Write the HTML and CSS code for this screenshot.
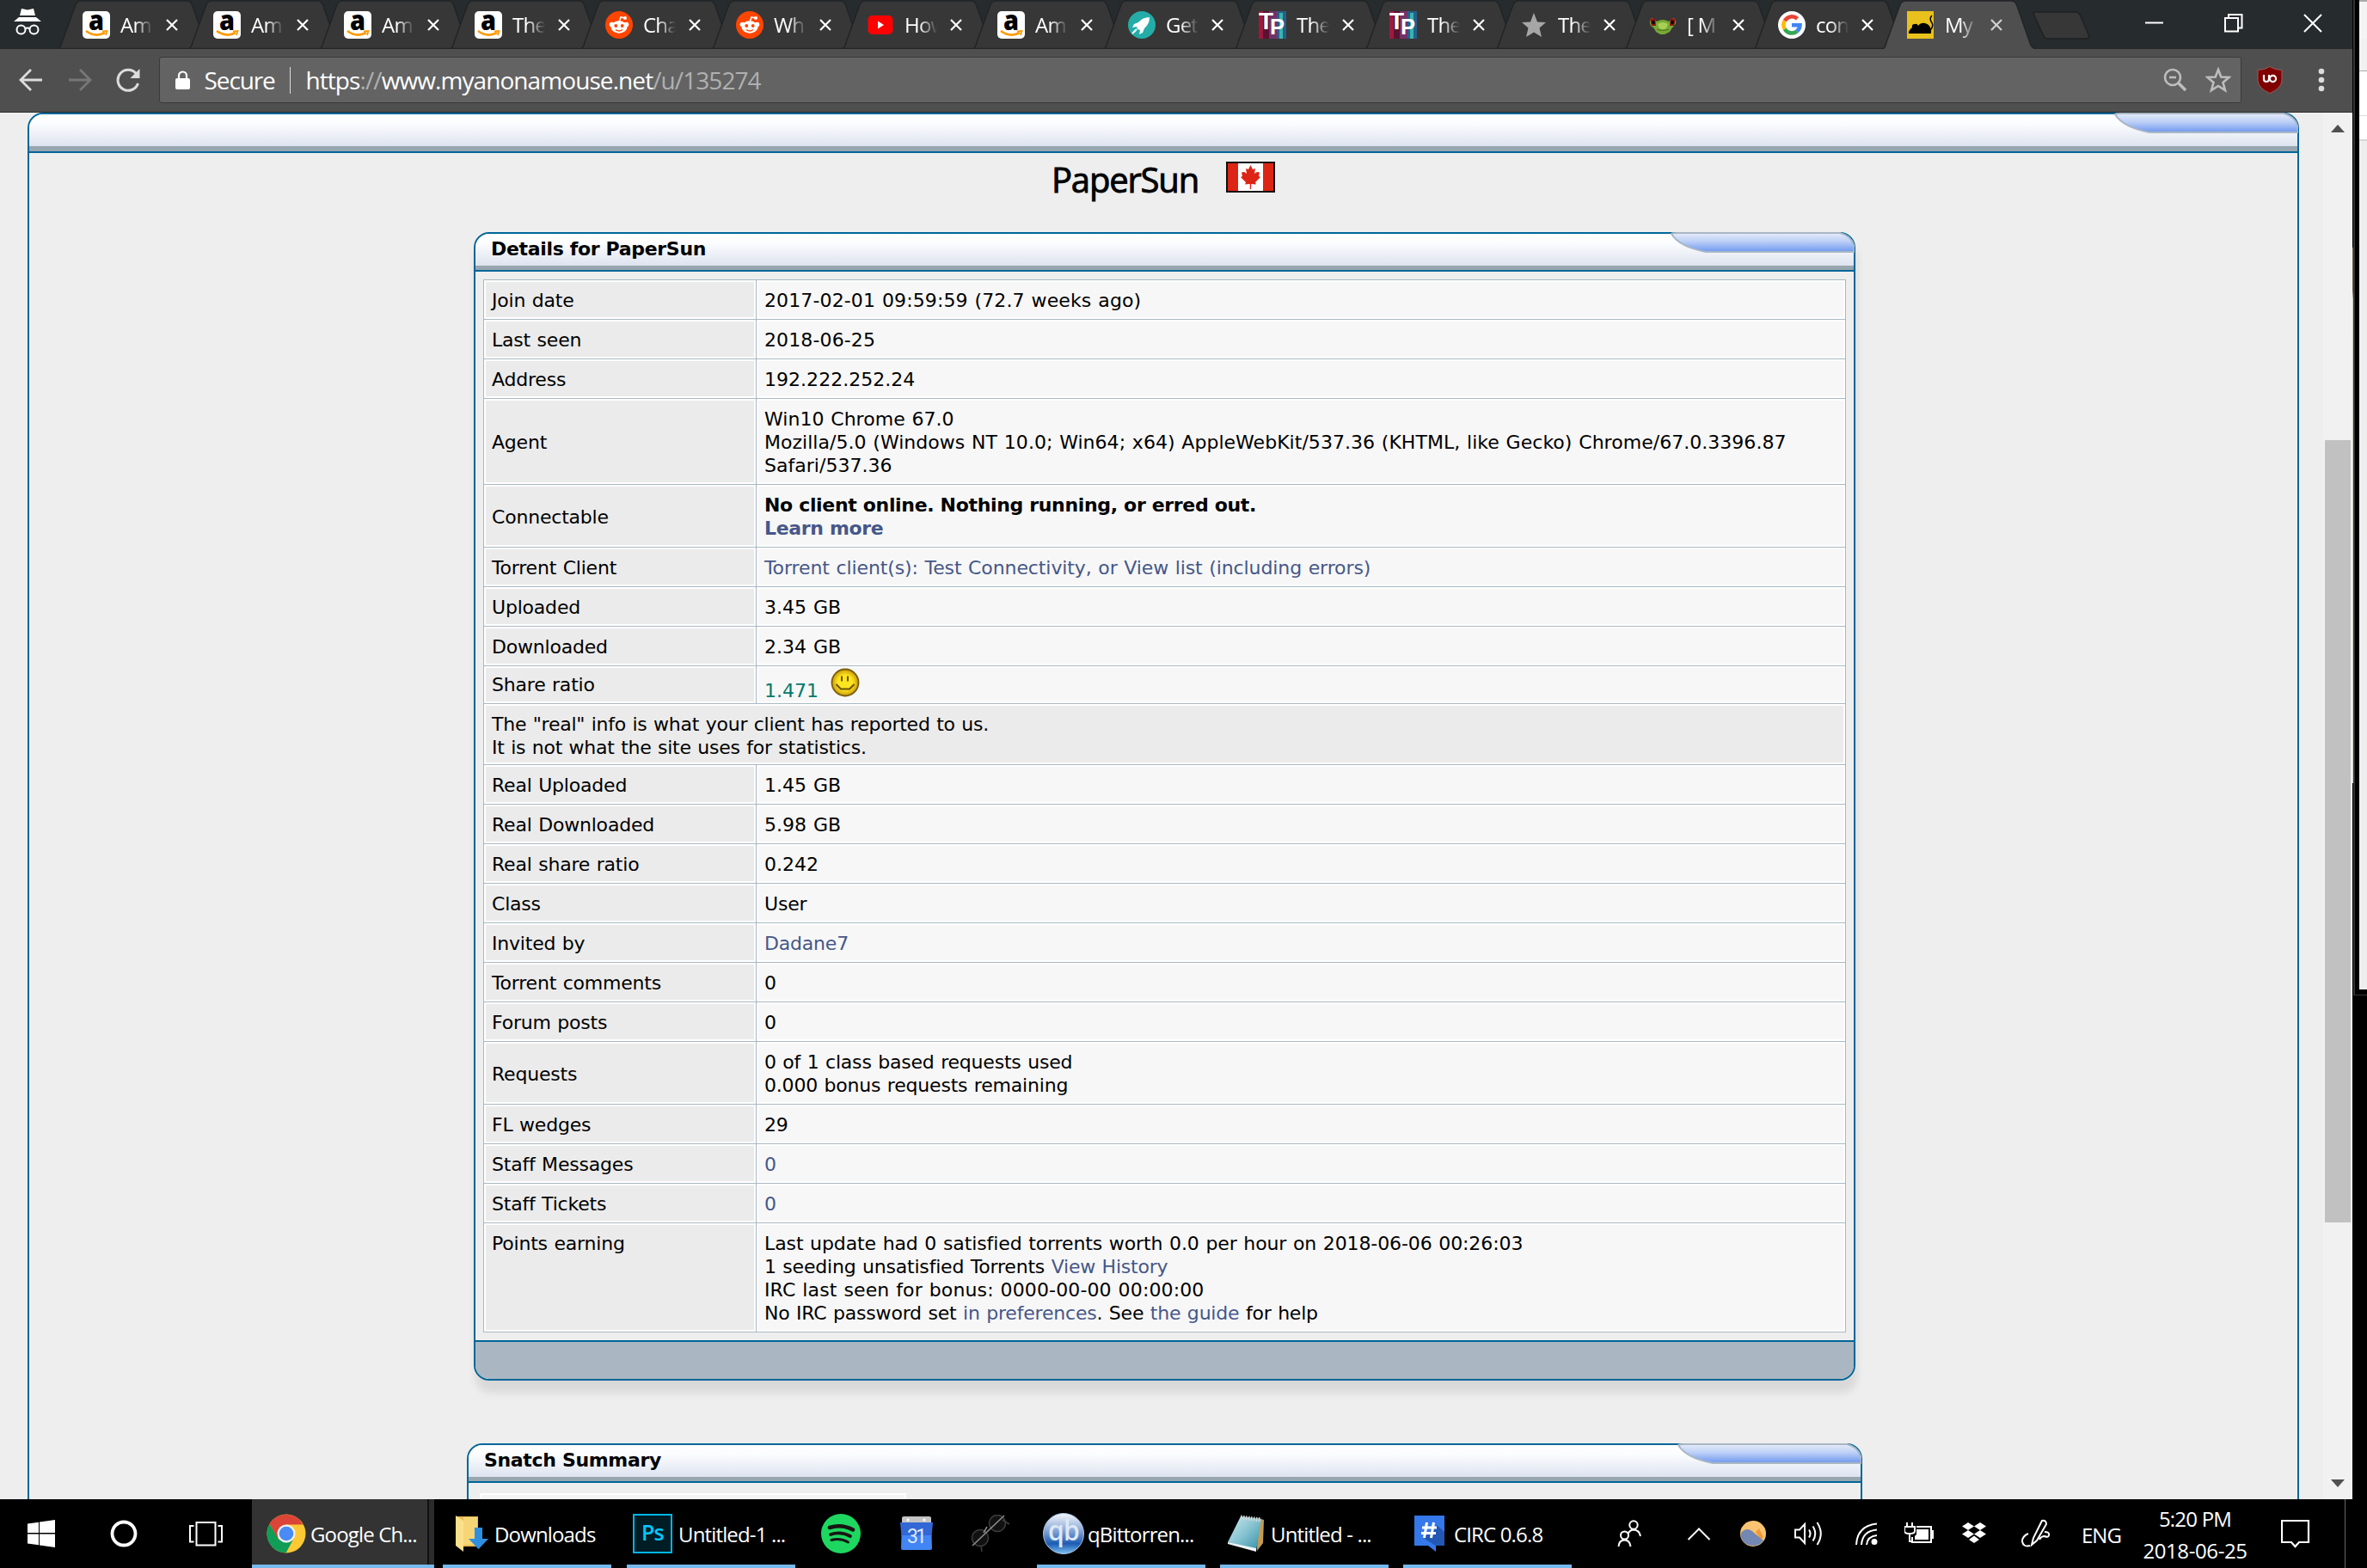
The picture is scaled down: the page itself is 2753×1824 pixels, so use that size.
FILE: index.html
```html
<!DOCTYPE html>
<html lang="en">
<head>
<meta charset="utf-8">
<title>PaperSun</title>
<link rel="stylesheet" href="styles.css">
</head>
<body>
<svg class="defs" aria-hidden="true">
  <defs>
    <linearGradient id="gloss" x1="0" y1="0" x2="0" y2="1"><stop offset="0" stop-color="#e6ecf9"/><stop offset=".45" stop-color="#bccff6"/><stop offset="1" stop-color="#6f98f0"/></linearGradient>
    <linearGradient id="orb" x1="0" y1="0" x2="0" y2="1"><stop offset="0" stop-color="#f4f7fb"/><stop offset=".4" stop-color="#8fabd6"/><stop offset=".75" stop-color="#1d5cb3"/><stop offset="1" stop-color="#7fc0f0"/></linearGradient>
    <linearGradient id="pad" x1="0" y1="0" x2="1" y2="1"><stop offset="0" stop-color="#cfeaf0"/><stop offset=".5" stop-color="#86c3d0"/><stop offset="1" stop-color="#2f8ea6"/></linearGradient>
    <radialGradient id="smile"><stop offset=".55" stop-color="#ffe51f"/><stop offset="1" stop-color="#c89a0a"/></radialGradient>
    <symbol id="tab" viewBox="0 0 178 57"><path d="M0 56.500C3 55 3 53 4.500 48L19 8Q21 1 26 1H149Q154 1 156 7L171 50Q173 56 178 56.500Z" fill="#373737" stroke="#222426" stroke-width="1.500"/></symbol>
    <symbol id="tab-on" viewBox="0 0 178 57"><path d="M0 57C3 55 3 53 4.500 48L19 8Q21 1 26 1H149Q154 1 156 7L171 50Q173 56 178 57Z" fill="#4f4f4f"/><path d="M0 57C3 55 3 53 4.500 48L19 8Q21 1 26 1H149Q154 1 156 7L171 50Q173 56 178 57" fill="none" stroke="#232527" stroke-width="1.500"/></symbol>
    <symbol id="x" viewBox="0 0 14 14"><path d="M1 1 13 13M13 1 1 13" stroke="currentColor" stroke-width="2.200" fill="none"/></symbol>
    <symbol id="amazon" viewBox="0 0 32 32"><rect width="32" height="32" rx="5" fill="#fff"/><text x="16" y="22" text-anchor="middle" font-family="Open Sans" font-weight="800" font-size="32" textLength="18" lengthAdjust="spacingAndGlyphs">a</text><path d="M4 23Q15 31 26 25" stroke="#f90" stroke-width="2.600" fill="none"/><path d="M23 23.500 28.500 23 27 28" stroke="#f90" stroke-width="1.800" fill="none"/></symbol>
    <symbol id="reddit" viewBox="0 0 32 32"><circle cx="16" cy="16" r="16" fill="#ff4500"/><path d="M16 13 18 7 23 8" stroke="#fff" stroke-width="1.600" fill="none"/><circle cx="23" cy="8" r="2" fill="#fff"/><circle cx="7.500" cy="15.500" r="2.800" fill="#fff"/><circle cx="24.500" cy="15.500" r="2.800" fill="#fff"/><ellipse cx="16" cy="18.500" rx="9.500" ry="7.200" fill="#fff"/><circle cx="12.300" cy="17" r="1.900" fill="#ff4500"/><circle cx="19.700" cy="17" r="1.900" fill="#ff4500"/><path d="M12 21.500Q16 24.500 20 21.500" stroke="#ff4500" stroke-width="1.400" fill="none"/></symbol>
    <symbol id="youtube" viewBox="0 0 32 32"><rect x="1.500" y="5" width="29" height="22" rx="5" fill="#f00"/><path d="M13 11.500 20 16 13 20.500Z" fill="#fff"/></symbol>
    <symbol id="rocket" viewBox="0 0 32 32"><circle cx="16" cy="16" r="16" fill="#24ada8"/><path d="M25 7Q17 7 12 13L7 15 5 19 10 18 11 21 14 22 13 27 17 25 19 20Q25 15 25 7Z" fill="#fff"/><path d="M5 26 10 21" stroke="#fff" stroke-width="2"/></symbol>
    <symbol id="tp" viewBox="0 0 32 32"><path fill="#9e1a3d" d="M0 0H9V32H0z"/><path fill="#5b1232" d="M5 0H12V32H5z"/><path fill="#723268" d="M12 0H21V32H12z"/><path fill="#255f8a" d="M21 0H32V32H21z"/><path fill="#39b4ac" d="M24 2H28V32H24z"/><text x="0" y="21" fill="#fff" font-family="Liberation Sans" font-weight="700" font-size="27" textLength="17" lengthAdjust="spacingAndGlyphs">T</text><text x="13" y="27" fill="#fff" font-family="Liberation Sans" font-weight="700" font-size="26" textLength="17" lengthAdjust="spacingAndGlyphs">P</text></symbol>
    <symbol id="star" viewBox="0 0 32 32"><path d="M16 2 20 12.500 30 13 22.500 19.500 25 30 16 24.500 7 30 9.500 19.500 2 13 12 12.500Z" fill="#a6a6a6"/></symbol>
    <symbol id="frog" viewBox="0 0 32 32"><path d="M1 14Q0 8 4 8L9 12Q16 8 23 12L28 8Q32 8 31 14L29 17Q26 20 24 24L18 27H13L8 24Q6 19 2 17Z" fill="#7aa834"/><path d="M10 15Q16 11 22 15L20 20Q16 22 12 20Z" fill="#a6cf55"/><path d="M1 9 7 8 8 17 3 17ZM25 8 31 9 29 17 24 17Z" fill="#8e1414"/><circle cx="5" cy="13" r="2.200" fill="#1d0505"/><circle cx="27" cy="13" r="2.200" fill="#1d0505"/><path d="M9 21Q16 24 23 21" stroke="#4c7a22" stroke-width="1.200" fill="none"/></symbol>
    <symbol id="google" viewBox="0 0 32 32"><circle cx="16" cy="16" r="16" fill="#fff"/><g fill="none" stroke-width="4.600"><path d="M22.500 8.800A9.500 9.500 0 0 0 7.800 11.200" stroke="#ea4335"/><path d="M7.800 11.200A9.500 9.500 0 0 0 7.800 20.800" stroke="#fbbc05"/><path d="M7.800 20.800A9.500 9.500 0 0 0 22 23.400" stroke="#34a853"/><path d="M22 23.400A9.500 9.500 0 0 0 25.500 16.300H16" stroke="#4285f4"/></g></symbol>
    <symbol id="mouse" viewBox="0 0 32 32"><path fill="#e9c11c" d="M0 0H31V32H0z"/><path d="M2 26Q1 23 6 19Q5 15 9 15Q12 14 13 17Q16 13 21 14Q29 16 28 26Z"/><path d="M27 22Q32 17 28 12Q26 8 29 5" stroke="#000" stroke-width="1.500" fill="none"/></symbol>
    <symbol id="corner" viewBox="0 0 214 24"><path d="M1 2Q2 1 8 1H197Q214 5 214 23H41Q10 17 1 2Z" fill="url(#gloss)" stroke="#a9b7c4" stroke-width="2"/></symbol>
  </defs>
</svg>
<div class="desktop">
  <main class="browser">
    <div class="strip">
      <div class="incognito"><svg width="32" height="32" viewBox="0 0 32 32"><path d="M9 0 16 1.500 23 0 25 8H7ZM6 10H26L32 15H0Z" fill="#fff"/><g fill="none" stroke="#fff" stroke-width="2"><circle cx="8.500" cy="24.500" r="5"/><circle cx="23.500" cy="24.500" r="5"/><path d="M13 23.500Q16 21.500 19 23.500"/></g></svg></div>
      <div class="tab"><svg class="shape"><use href="#tab"/></svg><svg class="fav"><use href="#amazon"/></svg><span class="name">Am</span><svg class="close"><use href="#x"/></svg></div>
      <div class="tab"><svg class="shape"><use href="#tab"/></svg><svg class="fav"><use href="#amazon"/></svg><span class="name">Am</span><svg class="close"><use href="#x"/></svg></div>
      <div class="tab"><svg class="shape"><use href="#tab"/></svg><svg class="fav"><use href="#amazon"/></svg><span class="name">Am</span><svg class="close"><use href="#x"/></svg></div>
      <div class="tab"><svg class="shape"><use href="#tab"/></svg><svg class="fav"><use href="#amazon"/></svg><span class="name">The</span><svg class="close"><use href="#x"/></svg></div>
      <div class="tab"><svg class="shape"><use href="#tab"/></svg><svg class="fav"><use href="#reddit"/></svg><span class="name">Cha</span><svg class="close"><use href="#x"/></svg></div>
      <div class="tab"><svg class="shape"><use href="#tab"/></svg><svg class="fav"><use href="#reddit"/></svg><span class="name">Wh</span><svg class="close"><use href="#x"/></svg></div>
      <div class="tab"><svg class="shape"><use href="#tab"/></svg><svg class="fav"><use href="#youtube"/></svg><span class="name">How</span><svg class="close"><use href="#x"/></svg></div>
      <div class="tab"><svg class="shape"><use href="#tab"/></svg><svg class="fav"><use href="#amazon"/></svg><span class="name">Am</span><svg class="close"><use href="#x"/></svg></div>
      <div class="tab"><svg class="shape"><use href="#tab"/></svg><svg class="fav"><use href="#rocket"/></svg><span class="name">Get</span><svg class="close"><use href="#x"/></svg></div>
      <div class="tab"><svg class="shape"><use href="#tab"/></svg><svg class="fav"><use href="#tp"/></svg><span class="name">The</span><svg class="close"><use href="#x"/></svg></div>
      <div class="tab"><svg class="shape"><use href="#tab"/></svg><svg class="fav"><use href="#tp"/></svg><span class="name">The</span><svg class="close"><use href="#x"/></svg></div>
      <div class="tab tight"><svg class="shape"><use href="#tab"/></svg><svg class="fav"><use href="#star"/></svg><span class="name">The</span><svg class="close"><use href="#x"/></svg></div>
      <div class="tab tight"><svg class="shape"><use href="#tab"/></svg><svg class="fav"><use href="#frog"/></svg><span class="name">[ M</span><svg class="close"><use href="#x"/></svg></div>
      <div class="tab tight"><svg class="shape"><use href="#tab"/></svg><svg class="fav"><use href="#google"/></svg><span class="name">con</span><svg class="close"><use href="#x"/></svg></div>
      <div class="tab on"><svg class="shape"><use href="#tab-on"/></svg><svg class="fav"><use href="#mouse"/></svg><span class="name">My</span><svg class="close"><use href="#x"/></svg></div>
      <svg class="newtab" width="68" height="33" viewBox="0 0 68 33"><path d="M2 1H50Q54 1 56 6L65 27Q67 32 62 32H18Q14 32 12 27L2 5Q0 1 2 1Z" fill="#373737" stroke="#1f2123" stroke-width="1.500"/></svg>
      <div class="controls">
        <svg width="22" height="22" viewBox="0 0 22 22"><path d="M0 10.500H21" stroke="#fff" stroke-width="2"/></svg>
        <svg width="22" height="22" viewBox="0 0 22 22"><path d="M1 5H16V20.500H1ZM5 5V1H20.500V16.500H16" fill="none" stroke="#fff" stroke-width="2"/></svg>
        <svg width="22" height="22" viewBox="0 0 22 22"><path d="M1 1 21 21M21 1 1 21" fill="none" stroke="#fff" stroke-width="2"/></svg>
      </div>
    </div>
    <div class="toolbar">
      <svg width="28" height="28" viewBox="0 0 28 28"><path d="M14 2 2 14 14 26M2 14H27" fill="none" stroke="#dcdcdc" stroke-width="2.800"/></svg>
      <svg width="28" height="28" viewBox="0 0 28 28"><path d="M14 2 26 14 14 26M26 14H1" fill="none" stroke="#777" stroke-width="2.800"/></svg>
      <svg width="28" height="28" viewBox="0 0 28 28"><path d="M24 7.500A12 12 0 1 0 25.500 18" fill="none" stroke="#dcdcdc" stroke-width="3"/><path d="M27.500 1V12H16.500Z" fill="#dcdcdc"/></svg>
      <div class="omnibox">
        <svg width="17" height="23" viewBox="0 0 17 23"><rect y="9" width="17" height="13" rx="2" fill="#fff"/><path d="M4 10V6A4.500 4.500 0 0 1 13 6V10" fill="none" stroke="#fff" stroke-width="2.200"/></svg>
        <span class="secure">Secure</span><i class="bar"></i>
        <span class="url">https<em>://</em>www.myanonamouse.net<em>/u/135274</em></span>
        <svg class="loupe" width="28" height="28" viewBox="0 0 28 28"><g fill="none" stroke="#bdbdbd" stroke-width="2.600"><circle cx="11" cy="11" r="9"/><path d="M7 11H15"/></g><path d="M17.500 17.500 26 26" stroke="#bdbdbd" stroke-width="3.600"/></svg>
        <svg width="30" height="30" viewBox="0 0 30 30"><path d="M15 3 18.300 11.500 27.500 12 20.500 18 23 27 15 22 7 27 9.500 18 2.500 12 11.700 11.500Z" fill="none" stroke="#bdbdbd" stroke-width="2.600"/></svg>
      </div>
      <svg class="shield" width="30" height="32" viewBox="0 0 30 32"><path d="M15 .5Q21 4.500 29 4.500V17Q28 26 15 31.500Q2 26 1 17V4.500Q9 4.500 15 .5Z" fill="#800000" stroke="#9b5a5a"/><g fill="none" stroke="#fff" stroke-width="2.200"><path d="M8 10V15Q8 18 11 18Q14 18 14 15V10"/><circle cx="18.500" cy="14.500" r="3.600"/></g></svg>
      <svg width="8" height="28" viewBox="0 0 8 28"><g fill="#dcdcdc"><circle cx="4" cy="4" r="3.300"/><circle cx="4" cy="14" r="3.300"/><circle cx="4" cy="24" r="3.300"/></g></svg>
    </div>
    <div class="view">
      <div class="page">
        <section class="panel outer">
          <header class="cap"><svg class="corner"><use href="#corner"/></svg></header>
          <h1><span>PaperSun</span><svg width="57" height="36" viewBox="0 0 57 36"><rect x="1" y="1" width="55" height="34" fill="#fff" stroke="#111" stroke-width="2"/><path d="M2 2H14V34H2ZM43 2H55V34H43Z" fill="#dd2515"/><path d="M28.500 4 31 9 34 8 33 14 36 12 39 12.500 38 17 40 18 34 24 35 26.500 29.200 26 29.200 32H27.800V26L22 26.500 23 24 17 18 19 17 18 12.500 21 12 24 14 23 8 26 9Z" fill="#dd2515"/></svg></h1>
          <section class="panel details">
            <header class="cap"><b>Details for PaperSun</b><svg class="corner"><use href="#corner"/></svg></header>
            <div class="table">
              <div class="row"><div class="k">Join date</div><div class="v wide">2017-02-01 09:59:59 (72.7 weeks ago)</div></div>
              <div class="row"><div class="k">Last seen</div><div class="v wide">2018-06-25</div></div>
              <div class="row"><div class="k">Address</div><div class="v even">192.222.252.24</div></div>
              <div class="row"><div class="k">Agent</div><div class="v even">Win10 Chrome 67.0<br>Mozilla/5.0 (Windows NT 10.0; Win64; x64) AppleWebKit/537.36 (KHTML, like Gecko) Chrome/67.0.3396.87<br>Safari/537.36</div></div>
              <div class="row"><div class="k">Connectable</div><div class="v"><b>No client online. Nothing running, or erred out.<br><a>Learn more</a></b></div></div>
              <div class="row"><div class="k">Torrent Client</div><div class="v near"><a>Torrent client(s): Test Connectivity, or View list (including errors)</a></div></div>
              <div class="row"><div class="k">Uploaded</div><div class="v even">3.45 GB</div></div>
              <div class="row"><div class="k">Downloaded</div><div class="v even">2.34 GB</div></div>
              <div class="row ratio"><div class="k">Share ratio</div><div class="v even"><span>1.471</span><svg width="34" height="34" viewBox="0 0 34 34"><circle cx="17" cy="17" r="15.500" fill="url(#smile)" stroke="#7a5c0c" stroke-width="1.800"/><path d="M13 9.500V15.500M20 9.500V15.500" stroke="#6b5200" stroke-width="2"/><path d="M6.500 19 12 24.500H22L27.500 19" stroke="#6b5200" stroke-width="2" fill="none"/></svg></div></div>
              <div class="row note"><div class="k">The "real" info is what your client has reported to us.<br>It is not what the site uses for statistics.</div></div>
              <div class="row"><div class="k">Real Uploaded</div><div class="v even">1.45 GB</div></div>
              <div class="row"><div class="k">Real Downloaded</div><div class="v even">5.98 GB</div></div>
              <div class="row"><div class="k">Real share ratio</div><div class="v even">0.242</div></div>
              <div class="row"><div class="k">Class</div><div class="v">User</div></div>
              <div class="row"><div class="k">Invited by</div><div class="v"><a>Dadane7</a></div></div>
              <div class="row"><div class="k">Torrent comments</div><div class="v">0</div></div>
              <div class="row"><div class="k">Forum posts</div><div class="v">0</div></div>
              <div class="row"><div class="k">Requests</div><div class="v">0 of 1 class based requests used<br>0.000 bonus requests remaining</div></div>
              <div class="row"><div class="k">FL wedges</div><div class="v">29</div></div>
              <div class="row"><div class="k">Staff Messages</div><div class="v"><a>0</a></div></div>
              <div class="row"><div class="k">Staff Tickets</div><div class="v"><a>0</a></div></div>
              <div class="row top"><div class="k">Points earning</div><div class="v"><span class="near">Last update had 0 satisfied torrents worth 0.0 per hour on 2018-06-06 00:26:03</span><br>1 seeding unsatisfied Torrents <a>View History</a><br><span class="wide2">IRC last seen for bonus: 0000-00-00 00:00:00</span><br>No IRC password set <a>in preferences</a>. See <a>the guide</a> for help</div></div>
            </div>
            <footer class="foot"></footer>
          </section>
          <section class="panel snatch">
            <header class="cap"><b>Snatch Summary</b><svg class="corner"><use href="#corner"/></svg></header>
            <div class="inner"></div>
          </section>
        </section>
      </div>
      <div class="scroll"><svg width="16" height="9" viewBox="0 0 16 9"><path d="M8 0 16 9H0Z" fill="#505050"/></svg><div class="thumb"></div><svg width="16" height="9" viewBox="0 0 16 9"><path d="M0 0H16L8 9Z" fill="#505050"/></svg></div>
    </div>
  </main>
  <aside class="edge"><div class="photo"></div><div class="frame"><div class="other"><i class="o1"></i><i class="o2"></i><i class="o3"></i><i class="o4"></i></div></div></aside>
  <footer class="taskbar">
    <svg class="sys start" width="32" height="32" viewBox="0 0 32 32"><path d="M0 4.500 13 2.700V15H0ZM14 2.500 32 0V15H14ZM0 16.500H13V29.200L0 27.500ZM14 16.500H32V32L14 29.400Z" fill="#fff"/></svg>
    <svg class="sys" width="34" height="34" viewBox="0 0 34 34"><circle cx="17" cy="17" r="13.500" fill="none" stroke="#fff" stroke-width="3.800"/></svg>
    <svg class="sys view3" width="42" height="30" viewBox="0 0 42 30"><path d="M9.500 2H31.500V28.500H9.500ZM6.500 6H2V24.500H6.500M34.500 6H39V24.500H34.500" fill="none" stroke="#fff" stroke-width="2"/></svg>
    <div class="app cur"><svg width="46" height="46" viewBox="0 0 46 46"><circle cx="23" cy="23" r="22.500" fill="#fcc934"/><path d="M3.500 11.800A22.500 22.500 0 0 1 42.500 12.500H23L13 29Z" fill="#db4437"/><path d="M3.500 11.800 13.500 29 23 33.500 32 28 22.500 45.500A22.500 22.500 0 0 1 3.500 11.800Z" fill="#0f9d58"/><circle cx="23" cy="23" r="10.500" fill="#f1f1f1"/><circle cx="23" cy="23" r="8.300" fill="#4a8af4"/></svg><span>Google Ch...</span></div>
    <div class="app dl"><svg width="38" height="42" viewBox="0 0 38 42"><path d="M1 1H26V36H1Z" fill="#e8bd52"/><path d="M0 0 9 6V42L0 35Z" fill="#fbe08c"/><path d="M9 2H25V34H9Z" fill="#f6d576"/><path d="M22 14H31V27H38L26.500 39 15 27H22Z" fill="#2e8fe0"/></svg><span>Downloads</span></div>
    <div class="app ps"><svg width="46" height="46" viewBox="0 0 46 46"><rect x="1" y="1" width="44" height="44" fill="#001d26" stroke="#00b5e6" stroke-width="2"/><text x="10" y="31" fill="#00c8ff" font-family="Open Sans" font-weight="600" font-size="26" textLength="26" lengthAdjust="spacingAndGlyphs">Ps</text></svg><span>Untitled-1 ...</span></div>
    <svg class="spot" width="46" height="46" viewBox="0 0 46 46"><circle cx="23" cy="23" r="23" fill="#1ed760"/><g fill="none" stroke="#191414" stroke-linecap="round"><path d="M10 16Q24 11.500 37 18.500" stroke-width="4.600"/><path d="M11 24Q23 20 34 26" stroke-width="3.800"/><path d="M12 30.500Q22 27.500 31.500 33" stroke-width="3"/></g></svg>
    <svg class="cal" width="38" height="40" viewBox="0 0 38 40"><rect x="2" y="0" width="34" height="10" rx="2" fill="#c4c4c4"/><circle cx="9" cy="4" r="1.600" fill="#fff"/><circle cx="28" cy="4" r="1.600" fill="#fff"/><path d="M0 7H38L36.500 23H1.500Z" fill="#3367d6"/><path d="M1.500 22H36.500L37 37Q37 39 35 39H3Q1 39 1 37Z" fill="#4285f4"/><text x="8" y="31" fill="#dfe8fb" font-family="Roboto" font-size="23" textLength="23">31</text></svg>
    <svg class="glasses" width="44" height="44" viewBox="0 0 44 44"><g fill="#111" stroke="#3c3c3c" stroke-width="1.600"><circle cx="10" cy="27" r="9.500"/><circle cx="30" cy="10" r="9.500"/><path d="M36 6 44 11M11 36 12 43" fill="none"/></g><path d="M1 36 38 1M14 21 18 14" stroke="#8a8a8a" stroke-width="1.600"/></svg>
    <div class="app qb"><svg width="48" height="48" viewBox="0 0 48 48"><circle cx="24" cy="24" r="23.500" fill="url(#orb)" stroke="#a8c4e8"/><text x="6" y="32" fill="#dbe8f7" font-family="Open Sans" font-weight="600" font-size="33" textLength="36" lengthAdjust="spacingAndGlyphs">qb</text></svg><span>qBittorren...</span></div>
    <div class="app np"><svg width="44" height="44" viewBox="0 0 44 44"><path d="M36 4 43 6 42 33 35 42Z" fill="#c49a55"/><path d="M16 2 40 5 34 42 1 32Z" fill="url(#pad)"/><path d="M1 32 34 39 34 43 1 34Z" fill="#eef5f7"/><path d="M16 3 40 6" stroke="#d8d8d8" stroke-width="5" stroke-dasharray="1.500 1.500"/></svg><span>Untitled - ...</span></div>
    <div class="app circ"><svg width="36" height="44" viewBox="0 0 36 44"><path d="M0 1H35V36H25V43L16 36H0Z" fill="#3578ea"/><path d="M26 12 35 20V36H25L10 27Z" fill="#2257b4"/><path d="M14.500 9 11.500 27M22.500 9 19.500 27M9 15H26M8 21.500H25" stroke="#fff" stroke-width="3" fill="none"/></svg><span>CIRC 0.6.8</span></div>
    <div class="tray">
      <svg class="i1" width="30" height="32" viewBox="0 0 30 32"><g fill="none" stroke="#fff" stroke-width="2"><circle cx="19" cy="6" r="4.700"/><circle cx="8.500" cy="18" r="4.500"/><path d="M12.500 16Q15 11.500 19 11.500Q26 12 27 19M1.500 31Q2 23.500 8.500 23.500Q14.500 23.500 15.500 31"/></g></svg>
      <svg class="i2" width="28" height="16" viewBox="0 0 28 16"><path d="M1.500 15 14 2.500 26.500 15" fill="none" stroke="#fff" stroke-width="2"/></svg>
      <svg class="i3" width="30" height="30" viewBox="0 0 30 30"><circle cx="15" cy="15" r="15" fill="#f8c471"/><path d="M18 13 22 9 27 19 24 22Z" fill="#f29a38"/><path d="M1 14Q8 6 16 14L27 23A15 15 0 0 1 .5 18Z" fill="#7387b5"/></svg>
      <svg class="i4" width="34" height="28" viewBox="0 0 34 28"><g fill="none" stroke="#fff" stroke-width="2"><path d="M1 9.500H6L12 3V25L6 18.500H1Z"/><path d="M17 9.500Q20 14 17 18.500M21.500 5.500Q27 14 21.500 22.500M26.500 1Q35 14 26.500 27"/></g></svg>
      <svg class="i5" width="26" height="26" viewBox="0 0 26 26"><g fill="none" stroke="#fff" stroke-width="2"><path d="M1 26Q2 4 25 1.500M7 26Q8 10 25 8.500M13 26Q14 16 25 15"/></g><circle cx="22" cy="22.500" r="3.500" fill="#fff"/></svg>
      <svg class="i6" width="34" height="26" viewBox="0 0 34 26"><path d="M3 0V5M9 0V5M0 5H12V10Q12 13 6 13Q0 13 0 10ZM6 13V22H10" fill="none" stroke="#fff" stroke-width="2"/><path d="M14 5H31V23H9V17M31 10H33V18H31" fill="none" stroke="#fff" stroke-width="2"/><path d="M14 8H28V20H12V16L14 14Z" fill="#fff"/></svg>
      <svg class="i7" width="28" height="26" viewBox="0 0 28 26"><path d="M7 0 14 4.500 7 9 0 4.500ZM21 0 28 4.500 21 9 14 4.500ZM7 9 14 13.500 7 18 0 13.500ZM21 9 28 13.500 21 18 14 13.500ZM14 15.500 20 20 14 24 8 20Z" fill="#fff"/></svg>
      <svg class="i8" width="34" height="34" viewBox="0 0 34 34"><g fill="none" stroke="#fff" stroke-width="2"><path d="M12 30 14 22 24 2Q29 1 29 6L18 25ZM8 17Q1 20 1 26Q2 33 10 31M27 15Q33 15 32 19Q31 22 27 20Q23 20 21 24"/></g></svg>
      <span class="lang">ENG</span>
      <div class="clock"><span>5:20 PM</span><span class="date">2018-06-25</span></div>
      <svg class="i9" width="34" height="33" viewBox="0 0 34 33"><path d="M1 1H32V26H21L16.500 31 12 26H1Z" fill="none" stroke="#fff" stroke-width="2.200"/></svg>
      <i class="peek"></i>
    </div>
  </footer>
</div>
</body>
</html>
```
FILE: styles.css
```css
* { box-sizing: border-box; }
body { margin: 0; background: #000; overflow: hidden; font-family: "Open Sans", sans-serif; }
svg { display: block; flex: none; }
.defs { position: absolute; width: 0; height: 0; }
.desktop { width: 2753px; height: 1824px; display: grid; grid-template-columns: 2736px 17px; grid-template-rows: 1744px 80px; }
.browser { display: flex; flex-direction: column; min-width: 0; }

.strip { height: 57px; background: #262b2e; border-bottom: 1px solid #282828; display: flex; flex: none; }
.incognito { width: 68px; padding: 10px 0 0 16px; flex: none; }
.tab { position: relative; flex: none; width: 178px; height: 57px; margin-right: -26px; display: flex; align-items: flex-start; padding: 13px 0 0 28px; color: #fff; }
.tab.tight { margin-right: -28px; }
.tab.on { z-index: 1; }
.tab.on .close { color: #d0d0d0; }
.shape { position: absolute; left: 0; top: 0; width: 178px; height: 57px; }
.fav { position: relative; width: 32px; height: 32px; }
.name { position: relative; width: 38px; margin-left: 12px; overflow: hidden; white-space: nowrap; font-size: 24px; line-height: 32px; letter-spacing: -.8px; -webkit-mask-image: linear-gradient(90deg, #000 45%, transparent); mask-image: linear-gradient(90deg, #000 45%, transparent); }
.close { position: relative; width: 14px; height: 14px; margin: 9px 0 0 15px; }
.newtab { margin: 13px 0 0 22px; }
.controls { display: flex; gap: 70px; margin-left: auto; padding: 16px 35px 0 0; }

.toolbar { height: 74px; flex: none; background: #4f4f4f; border-bottom: 1px solid #2b2b2b; display: flex; align-items: center; padding: 0 32px 1px 22px; gap: 28.5px; }
.omnibox { width: 2422px; height: 54px; margin-left: -7px; background: #636363; border: 1px solid #3a3a3a; border-radius: 3px; display: flex; align-items: center; padding: 0 11px 0 18px; color: #fff; font-size: 28px; flex: none; }
.secure { width: 82px; margin-left: 17px; letter-spacing: -1.1px; }
.bar { width: 1px; height: 31px; background: #ddd; margin: 0 18px 0 17px; }
.url { letter-spacing: -.92px; }
.url em { font-style: normal; color: #b0b0b0; }
.loupe { margin: 0 21px 0 auto; }
.shield { margin-left: -10px; }
.toolbar > svg:last-child { margin-left: 12px; }

.view { flex: 1; min-height: 0; display: flex; background: #eee; }
.page { width: 2702px; overflow: hidden; padding-left: 32px; font: 22px/27px "DejaVu Sans", sans-serif; color: #000; }
.scroll { width: 34px; background: #f1f1f1; display: flex; flex-direction: column; align-items: center; padding: 14px 0; }
.thumb { width: 30px; height: 910px; margin: 358px 0 auto; background: #c1c1c1; }

.panel { border: 2px solid #069; border-radius: 18px; background: #eee; }
.cap { position: relative; height: 44px; border-radius: 16px 16px 0 0; border-bottom: 2px solid #069; background: linear-gradient(#fff 0, #fbfcfe 30%, #dde3ef 100%) 0 0 / 100% 37px no-repeat, #98a6b0; padding: 4px 0 0 18px; }
.cap b { font-size: 22px; }
.panel b { letter-spacing: -.33px; word-spacing: 0; }
.corner { position: absolute; right: -1px; top: -2px; width: 214px; height: 24px; }
.outer { width: 2642px; height: 1700px; }
.outer > .cap { height: 45px; }
h1 { margin: 0; height: 92px; padding: 10px 0 0 1189px; display: flex; font: 400 40px/60px "Open Sans", sans-serif; letter-spacing: -1.2px; -webkit-text-stroke: .9px #000; }
h1 svg { -webkit-text-stroke: 0; }
h1 span { width: 203px; margin-top: -9px; }

.details { width: 1607px; margin-left: 517px; box-shadow: 2px 14px 10px rgba(0,0,0,.09); }
.table { margin: 9px; border: solid #a9b8c3; border-width: 0 1px 1px; }
.row { display: grid; grid-template-columns: 316px 1fr; border-top: 1px solid #a9b8c3; background: #fff; word-spacing: .75px; letter-spacing: -.2px; }
.k { margin: 2px; padding: 2px 0 0 7px; background: #ebebeb; display: flex; align-items: center; }
.v { border-left: 1px solid #a9b8c3; background: #f7f7f7; box-shadow: inset 0 0 0 2px #fff; padding: 10px 0 8px 9px; white-space: nowrap; }
.row a { color: #465788; }
.near { letter-spacing: -.1px; }
.even { letter-spacing: .03px; }
.wide { letter-spacing: .12px; }
.wide2 { letter-spacing: .13px; }
.top .k { align-items: flex-start; padding-top: 8px; }
.ratio { height: 44px; }
.ratio .k { padding-top: 0; }
.ratio .v { display: flex; color: #007a6e; padding: 15px 0 0 9px; }
.ratio .v svg { margin: -13px 0 0 14px; }
.note { grid-template-columns: 1fr; }
.note .k { padding: 8px 0 4px 7px; letter-spacing: -.24px; }
.foot { height: 45px; background: #aab7c2; border-top: 2px solid #069; border-radius: 0 0 16px 16px; }
.snatch { width: 1623px; height: 200px; margin: 73px 0 0 509px; }
.inner { width: 496px; height: 100px; margin: 12px 0 0 13px; border: 2px solid #fff; background: #f5f5f5; }

.edge { position: relative; display: flex; background: #000; }
.photo { width: 1px; height: 623px; margin-top: 288px; background: linear-gradient(#6b5a4a 0 50px, #c9c9bf 60px, #d5d5cc); }
.frame { width: 16px; height: 1158px; border: solid #353535; border-width: 0 0 1px 2px; padding-left: 5px; }
.other { height: 1151px; background: #eee; display: flex; flex-direction: column; }
.o1 { height: 45px; background: #f4f4f4; border-top: 2px solid #aaa; }
.o2 { height: 38px; background: #f1f1f1; border-bottom: 1px solid #aaa; }
.o3 { height: 52px; background: #fff; border-bottom: 1px solid #ddd; }
.o4 { height: 29px; background: #fff; border-bottom: 2px solid #d6d6d6; }

.taskbar { grid-column: 1 / 3; background: #000; color: #fff; display: flex; align-items: center; font-size: 24px; white-space: nowrap; }
.start { margin: 0 63px 0 32px; }
.view3 { margin: 0 32px 0 58px; }
.app { height: 80px; width: 196px; display: flex; align-items: center; border-bottom: 4px solid #76b9ed; padding: 4px 0 0 7px; letter-spacing: -.85px; flex: none; }
.app span { margin-left: 7px; }
.cur { width: 212px; padding-left: 17px; background: linear-gradient(90deg, #333 204px, #111 204px 206px, #2b2b2b 206px); }
.cur span { margin-left: 5px; }
.dl { margin-left: 10px; padding-left: 15px; }
.ps { margin-left: 18px; }
.spot { margin-left: 30px; }
.cal { margin-left: 46px; }
.glasses { margin-left: 45px; }
.qb { margin-left: 32px; }
.qb span { margin-left: 4px; }
.np { margin-left: 17px; padding-left: 8px; }
.circ { margin-left: 17px; padding-left: 13px; }
.circ span { margin-left: 10px; }
.tray { display: flex; align-items: center; height: 80px; }
.i1 { margin-left: 53px; }
.i2 { margin-left: 51px; }
.i3 { margin-left: 34px; }
.i4 { margin-left: 33px; }
.i5 { margin-left: 37px; }
.i6 { margin-left: 31px; }
.i7 { margin-left: 33px; }
.i8 { margin-left: 41px; }
.lang { width: 46px; margin: 2px 0 0 36px; letter-spacing: -1px; }
.clock { width: 126px; margin: 1px 0 0 23px; display: flex; flex-direction: column; align-items: center; line-height: 37px; letter-spacing: -.8px; }
.date { letter-spacing: -.4px; }
.i9 { margin-left: 37px; }
.peek { width: 1px; height: 80px; margin-left: 40px; background: #666; }
```
